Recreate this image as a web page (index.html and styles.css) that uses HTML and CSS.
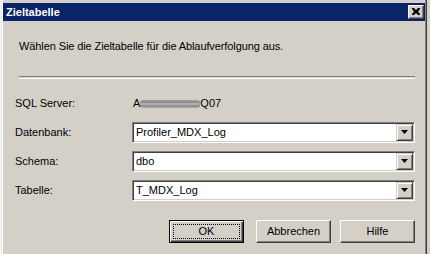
FILE: index.html
```html
<!DOCTYPE html>
<html lang="de">
<head>
<meta charset="utf-8">
<title>Zieltabelle</title>
<link rel="stylesheet" href="styles.css">
</head>
<body>
<div class="screen">
  <div class="behind-left"></div>
  <div class="dialog">
    <div class="titlebar">
      <span class="title">Zieltabelle</span>
      <span class="close-btn">
        <svg width="8" height="7" viewBox="0 0 8 7"><path d="M0 0h2l2 2 2-2h2v1l-2 2.5 2 2.5v1h-2l-2-2-2 2h-2v-1l2-2.5-2-2.5z" fill="#000"/></svg>
      </span>
    </div>
    <div class="content">
      <p class="intro">Wählen Sie die Zieltabelle für die Ablaufverfolgung aus.</p>
      <div class="separator"></div>
      <div class="form">
        <span class="label">SQL Server:</span>
        <span class="value">A<span class="redacted"></span>Q07</span>

        <span class="label">Datenbank:</span>
        <div class="combo"><span class="combo-text">Profiler_MDX_Log</span><span class="drop"><svg width="7" height="4" viewBox="0 0 7 4"><path d="M0 0h7l-3.5 4z" fill="#000"/></svg></span></div>

        <span class="label">Schema:</span>
        <div class="combo"><span class="combo-text">dbo</span><span class="drop"><svg width="7" height="4" viewBox="0 0 7 4"><path d="M0 0h7l-3.5 4z" fill="#000"/></svg></span></div>

        <span class="label">Tabelle:</span>
        <div class="combo"><span class="combo-text">T_MDX_Log</span><span class="drop"><svg width="7" height="4" viewBox="0 0 7 4"><path d="M0 0h7l-3.5 4z" fill="#000"/></svg></span></div>
      </div>
      <div class="buttons">
        <span class="btn btn-default"><span class="focus">OK</span></span>
        <span class="btn">Abbrechen</span>
        <span class="btn">Hilfe</span>
      </div>
    </div>
  </div>
  <div class="behind-right"></div>
</div>
</body>
</html>
```
FILE: styles.css
```css
html, body {
  margin: 0;
  padding: 0;
  background: #d4d0c8;
}
body {
  font-family: "Liberation Sans", Arial, sans-serif;
  font-size: 11px;
  line-height: 13px;
  color: #000;
}
.screen {
  display: flex;
  width: 430px;
  height: 254px;
  overflow: hidden;
}
.behind-left {
  width: 2px;
  flex: none;
  background: linear-gradient(#f4f4f4, #f4f4f4) 0 0/1px 100% no-repeat, #e8e8e8;
}
.dialog {
  flex: none;
  width: 425px;
  box-sizing: border-box;
  border-left: 1px solid #ffffff;
  border-right: 1px solid #404040;
  padding-top: 3px;
  padding-right: 1px;
  background: #d4d0c8;
  box-shadow: inset -1px 0 0 #808080;
}
.behind-right {
  flex: none;
  width: 3px;
  background: #d4d0c8;
}
.titlebar {
  height: 18px;
  background: #0a246a;
  display: flex;
  align-items: center;
  justify-content: space-between;
  padding: 0 1px 0 3px;
}
.title {
  color: #fff;
  font-weight: bold;
  font-size: 11px;
}
.close-btn {
  width: 16px;
  height: 14px;
  box-sizing: border-box;
  background: #d4d0c8;
  border-top: 1px solid #fff;
  border-left: 1px solid #fff;
  border-right: 1px solid #404040;
  border-bottom: 1px solid #404040;
  box-shadow: inset -1px -1px 0 #808080;
  display: flex;
  align-items: center;
  justify-content: center;
  padding: 0 1px 1px 0;
}
.content {
  padding: 0 10px 0 12px;
}
.intro {
  margin: 19px 0 0 4px;
  letter-spacing: -0.1px;
}
.separator {
  margin: 23px 0 0 4px;
  height: 1px;
  border-top: 1px solid #808080;
  border-bottom: 1px solid #ffffff;
}
.form {
  margin-top: 14px;
  display: grid;
  grid-template-columns: 117px 283px;
  grid-auto-rows: 21px;
  row-gap: 8px;
  align-items: center;
}
.value {
  display: flex;
  align-items: center;
  padding-left: 1px;
}
.redacted {
  display: inline-block;
  width: 60px;
  height: 8px;
  margin-top: 1px;
  border-radius: 3px;
  background: linear-gradient(#9c9c9c, #8a8a8a 35%, #c8c8c8 50%, #8a8a8a 65%, #a8a8a8);
}
.combo {
  height: 21px;
  box-sizing: border-box;
  background: #fff;
  border-top: 1px solid #808080;
  border-left: 1px solid #808080;
  border-right: 1px solid #ffffff;
  border-bottom: 1px solid #ffffff;
  box-shadow: inset 1px 1px 0 #404040, inset -1px -1px 0 #d4d0c8;
  display: flex;
  align-items: center;
  justify-content: space-between;
  padding: 1px 1px 1px 3px;
}
.drop {
  width: 17px;
  height: 17px;
  box-sizing: border-box;
  background: #d4d0c8;
  border-top: 1px solid #d4d0c8;
  border-left: 1px solid #d4d0c8;
  border-right: 1px solid #404040;
  border-bottom: 1px solid #404040;
  box-shadow: inset 1px 1px 0 #fff, inset -1px -1px 0 #808080;
  display: flex;
  align-items: center;
  justify-content: center;
  padding: 0 1px 1px 0;
}
.drop svg { display: block; }
.buttons {
  margin-top: 19px;
  display: flex;
  justify-content: flex-end;
  gap: 9px;
}
.btn {
  width: 75px;
  height: 23px;
  box-sizing: border-box;
  background: #d4d0c8;
  border-top: 1px solid #fff;
  border-left: 1px solid #fff;
  border-right: 1px solid #404040;
  border-bottom: 1px solid #404040;
  box-shadow: inset -1px -1px 0 #808080;
  display: flex;
  align-items: center;
  justify-content: center;
}
.btn-default {
  margin-right: 3px;
  border: 1px solid #000;
  box-shadow: inset 1px 1px 0 #fff, inset -1px -1px 0 #404040, inset -2px -2px 0 #808080;
  padding: 3px;
}
.focus {
  flex: 1;
  align-self: stretch;
  display: flex;
  align-items: center;
  justify-content: center;
  border: 1px dotted #000;
}
```
